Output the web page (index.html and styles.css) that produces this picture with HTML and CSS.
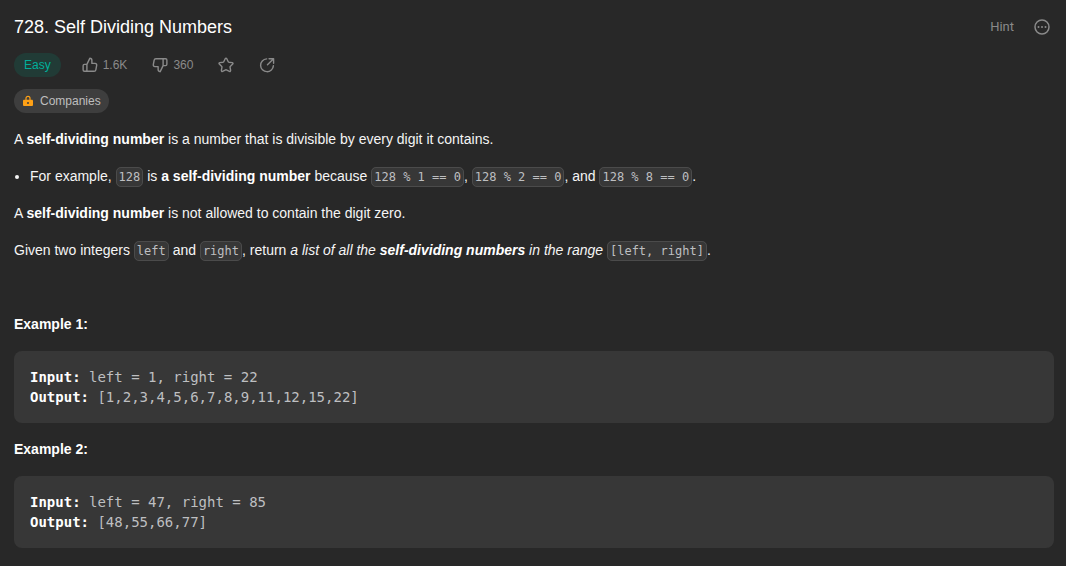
FILE: index.html
```html
<!DOCTYPE html>
<html lang="en">
<head>
<meta charset="utf-8">
<meta name="viewport" content="width=device-width, initial-scale=1">
<title>728. Self Dividing Numbers</title>
<link rel="stylesheet" href="styles.css">
</head>
<body>
<main class="problem">
  <header class="header">
    <h1 class="title">728. Self Dividing Numbers</h1>
    <div class="tools">
      <button class="hint" type="button">Hint</button>
      <button class="icon-button" type="button" aria-label="More">
        <svg class="icon icon-more" viewBox="0 0 18 18" aria-hidden="true"><circle cx="9" cy="9" r="7"/><path class="dots" d="M5.5 9h.01M9 9h.01M12.5 9h.01"/></svg>
      </button>
    </div>
  </header>
  <div class="meta">
    <span class="difficulty">Easy</span>
    <button class="icon-button like" type="button" aria-label="Like, 1.6K">
      <svg class="icon" viewBox="0.5 0.5 17 17" aria-hidden="true"><path d="M5.7 15.6V8.3L8.8 1.9c1.5 0 2.2 1 2.2 2.2v3.2h3.4c1.2 0 1.9.9 1.7 2l-.9 4.8c-.2 1-.8 1.5-1.8 1.5ZM5.7 8.3H3.1c-.9 0-1.4.5-1.4 1.4v4.5c0 .9.5 1.4 1.4 1.4h2.6"/></svg>
      <span>1.6K</span>
    </button>
    <button class="icon-button" type="button" aria-label="Dislike, 360">
      <svg class="icon" viewBox="0.5 0.5 17 17" aria-hidden="true"><path d="M12.3 2.4v7.3l-3.1 6.4C7.7 16.1 7 15.1 7 13.9v-3.2H3.6c-1.2 0-1.9-.9-1.7-2l.9-4.8c.2-1 .8-1.5 1.8-1.5ZM12.3 9.7h2.6c.9 0 1.4-.5 1.4-1.4V3.8c0-.9-.5-1.4-1.4-1.4h-2.6"/></svg>
      <span>360</span>
    </button>
    <button class="icon-button" type="button" aria-label="Add to list">
      <svg class="icon" viewBox="0.5 0.5 17 17" aria-hidden="true"><path d="M8.2 2.3c.4-.7 1.2-.7 1.6 0l1.6 3.2c.1.3.4.4.7.5l3.5.5c.8.1 1.1 1 .5 1.5l-2.6 2.5c-.2.2-.3.5-.2.8l.6 3.5c.1.8-.6 1.3-1.3 1l-3.2-1.7c-.3-.1-.6-.1-.8 0l-3.2 1.7c-.7.3-1.4-.2-1.3-1l.6-3.5c.1-.3 0-.6-.2-.8L1.9 8c-.6-.5-.3-1.4.5-1.5L5.9 6c.3-.1.6-.2.7-.5Z"/></svg>
    </button>
    <button class="icon-button" type="button" aria-label="Share">
      <svg class="icon" viewBox="0.5 0.5 17 17" aria-hidden="true"><path d="M8.6 2.5A6.8 6.8 0 1 0 15.8 9.7M9.5 8.8l6.2-6.2M11.2 2.3h4.8v4.8"/></svg>
    </button>
  </div>
  <div class="tags">
    <button class="companies" type="button">
      <svg class="lock" viewBox="0 0 12 12" aria-hidden="true"><path class="shackle" d="M4 5.5V3.3a2 2 0 0 1 4 0v2.2"/><path class="lock-body" fill-rule="evenodd" d="M2.3 4.8h7.4c.8 0 1.3.5 1.3 1.3v3.6c0 .8-.5 1.3-1.3 1.3H2.3C1.500 11 1 10.500 1 9.700V6.100C1 5.300 1.500 4.800 2.300 4.800ZM6 7a1 1 0 1 0 0 2 1 1 0 0 0 0-2Z"/></svg>
      Companies
    </button>
  </div>
  <article class="description">
    <p>A <strong>self-dividing number</strong> is a number that is divisible by every digit it contains.</p>
    <ul>
      <li>For example, <code>128</code> is <strong>a self-dividing number</strong> because <code>128 % 1 == 0</code>, <code>128 % 2 == 0</code>, and <code>128 % 8 == 0</code>.</li>
    </ul>
    <p>A <strong>self-dividing number</strong> is not allowed to contain the digit zero.</p>
    <p>Given two integers <code>left</code> and <code>right</code>, return <em>a list of all the <strong>self-dividing numbers</strong> in the range </em><code>[left, right]</code>.</p>
    <p>&nbsp;</p>
    <p><strong>Example 1:</strong></p>
<pre><strong>Input:</strong> left = 1, right = 22
<strong>Output:</strong> [1,2,3,4,5,6,7,8,9,11,12,15,22]</pre>
    <p><strong>Example 2:</strong></p>
<pre><strong>Input:</strong> left = 47, right = 85
<strong>Output:</strong> [48,55,66,77]</pre>
  </article>
</main>
</body>
</html>
```

FILE: styles.css
```css
* {
  box-sizing: border-box;
}

body {
  margin: 0;
  background: #282828;
  color: #f5f5f5;
  font: 14px/21px "Liberation Sans", Arial, sans-serif;
}

button {
  margin: 0;
  padding: 0;
  border: 0;
  background: none;
  color: inherit;
  font: inherit;
  cursor: pointer;
}

.problem {
  padding: 15px 12px 18px 14px;
}

.header,
.tools,
.meta,
.tags,
.icon-button,
.companies {
  display: flex;
  align-items: center;
}

.header {
  justify-content: space-between;
}

.title {
  margin: 0;
  color: #fff;
  font-size: 18px;
  font-weight: 400;
  line-height: 24px;
}

.tools {
  gap: 19px;
  padding-right: 3px;
  color: #8a8a8a;
}

.hint {
  font: 400 13px/24px Roboto, sans-serif;
}

.meta {
  gap: 25px;
  margin-top: 14px;
}

.difficulty {
  padding: 0 10px;
  border-radius: 12px;
  background: #213b36;
  color: #00af9b;
  font-size: 12px;
  line-height: 24px;
}

.icon-button {
  gap: 5px;
  color: #8a8a8a;
  font-size: 12px;
  line-height: 24px;
}

.like {
  margin-left: -4px;
}

.icon {
  width: 16px;
  height: 16px;
  fill: none;
  stroke: currentColor;
  stroke-width: 1.5;
  stroke-linecap: round;
  stroke-linejoin: round;
}

.icon-more {
  width: 18px;
  height: 18px;
}

.dots {
  stroke-width: 2;
}

.tags {
  margin-top: 12px;
}

.companies {
  gap: 6px;
  padding: 0 8px;
  border-radius: 12px;
  background: #3e3e3e;
  color: #bebebf;
  font-size: 12px;
  line-height: 24px;
}

.lock {
  width: 12px;
  height: 12px;
}

.lock-body {
  fill: #ffa116;
}

.shackle {
  fill: none;
  stroke: #ffa116;
  stroke-width: 1.2;
}

.description p,
.description ul,
.description pre {
  margin: 16px 0;
}

.description ul {
  padding-left: 16px;
}

.description strong {
  color: #fff;
  font-weight: 700;
}

.description code,
.description pre {
  font-family: "DejaVu Sans Mono", monospace;
  color: #bebfc1;
}

.description code {
  padding: 2px;
  border: 1px solid #4b4b4b;
  border-radius: 5px;
  background: #373737;
  font-size: 12px;
  line-height: 12px;
}

.description pre {
  padding: 16px;
  border-radius: 8px;
  background: #373737;
  line-height: 20px;
  white-space: pre-wrap;
}
```
